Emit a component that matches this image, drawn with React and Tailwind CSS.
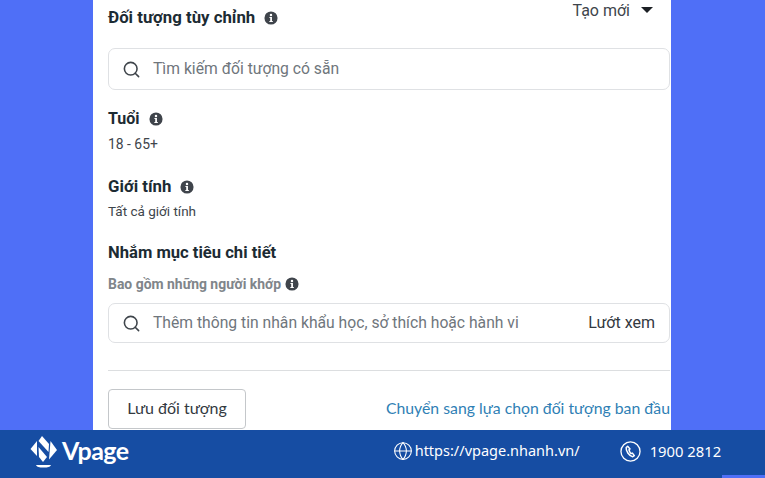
import { Search, Globe } from "lucide-react";

const InfoIcon = ({ className }) => (
  <svg viewBox="0 0 16 16" className={className}>
    <circle cx="8" cy="8" r="7.500" fill="#3f444b" />
    <circle cx="8" cy="4.500" r="1.400" fill="#fff" />
    <path d="M6.200 6.800h2.900v4.600h1v1.300H6.100v-1.300h1V8.100h-.9z" fill="#fff" />
  </svg>
);

const Logo = () => (
  <svg viewBox="30 433 28 35" className="w-[28px] h-[35px]" fill="#fff">
    <polygon points="30.500,448 37,440 37,455" />
    <polygon points="42,435 49,443 48.500,451 38.500,440" />
    <polygon points="50.500,440 57,449 49,458.500" />
    <polygon points="38.500,446 47,456 43,461 39,456" />
    <path d="M36 464h15c-1 2-3 2.500-7.500 2.500s-6.500-.5-7.500-2.500z" />
  </svg>
);

const PhoneRing = () => (
  <svg viewBox="0 0 22 22" className="w-[21px] h-[21px]" fill="none" stroke="#fff">
    <circle cx="11" cy="11" r="10" strokeWidth="1.400" />
    <path
      d="M8 5.500 6.500 6.800c-.5 3.600 2.800 8.700 6.800 9.700l1.700-1.200-2-2.600-1.400.5c-1-.8-1.900-2.600-2.200-4l1.100-.9z"
      strokeWidth="1.600"
      strokeLinejoin="round"
    />
  </svg>
);

const Label = ({ text, size }) => (
  <div className={`flex items-center gap-[9px] h-[20px] font-bold text-[#1c2b33] ${size}`}>
    <span>{text}</span>
    <InfoIcon className="w-[14px] h-[14px]" />
  </div>
);

const SearchBox = ({ placeholder, right, height }) => (
  <div className={`flex items-center pl-[13px] pr-[14px] bg-white border border-[#dfe1e4] rounded-[7px] ${height}`}>
    <Search className="w-[19px] h-[19px] text-[#3f454b] shrink-0" strokeWidth={2} />
    <span className="ml-[12px] text-[15.700px] text-[#6f767c]">{placeholder}</span>
    {right && <span className="ml-auto text-[16px] text-[#33393f]">{right}</span>}
  </div>
);

export default function App() {
  return (
    <div className="relative w-[765px] h-[478px] overflow-hidden flex flex-col bg-[#4f6ff7] font-['Roboto',sans-serif]">
      <div className="ml-[93px] w-[578px] h-[430px] bg-white pl-[15px] pr-px flex flex-col">
        <div className="flex items-start justify-between pt-[8px] h-[48px]">
          <Label text="Đối tượng tùy chỉnh" size="text-[16.800px]" />
          <div className="flex items-center gap-[11px] pr-[17px] -mt-[7px] h-[20px]">
            <span className="text-[16px] text-[#3e454b]">Tạo mới</span>
            <span className="w-0 h-0 -mt-[2px] border-x-[6.500px] border-x-transparent border-t-[6px] border-t-[#1c2025]" />
          </div>
        </div>
        <SearchBox placeholder="Tìm kiếm đối tượng có sẵn" height="h-[42px]" />
        <div className="mt-[19px]">
          <Label text="Tuổi" size="text-[16px]" />
        </div>
        <p className="mt-[7px] text-[13.900px] leading-[16px] text-[#3e454b]">18 - 65+</p>
        <div className="mt-[25px]">
          <Label text="Giới tính" size="text-[16.800px]" />
        </div>
        <p className="mt-[6px] text-[13.500px] leading-[16px] text-[#3e454b]">Tất cả giới tính</p>
        <div className="mt-[24px] h-[20px] flex items-center text-[16.600px] font-bold text-[#1c2b33]">Nhắm mục tiêu chi tiết</div>
        <div className="mt-[11px] h-[20px] flex items-center gap-[4px] text-[13.950px] font-bold text-[#80858a]">
          <span>Bao gồm những người khớp</span>
          <InfoIcon className="w-[14px] h-[14px]" />
        </div>
        <div className="mt-[9px]">
          <SearchBox placeholder="Thêm thông tin nhân khẩu học, sở thích hoặc hành vi" right="Lướt xem" height="h-[40px]" />
        </div>
        <div className="mt-[27px] h-px bg-[#dcdee0]" />
        <div className="mt-[18px] flex items-center justify-between">
          <div className="w-[138px] h-[40px] pb-[2px] flex items-center justify-center border border-[#c4c7ca] rounded-[4px] text-[16px] text-[#33393f] font-['Lato',sans-serif]">
            Lưu đối tượng
          </div>
          <span className="mb-[2px] text-[15.800px] text-[#2f7fb5] font-['Lato',sans-serif] whitespace-nowrap">Chuyển sang lựa chọn đối tượng ban đầu</span>
        </div>
      </div>
      <div className="h-[48px] pb-[6px] bg-[#164da3] flex items-center text-white">
        <div className="ml-[30px] flex items-center gap-[4px]">
          <Logo />
          <span className="text-[25px] font-bold tracking-[-0.5px] font-['Lato',sans-serif]">Vpage</span>
        </div>
        <div className="ml-[264px] flex items-center gap-[2px]">
          <Globe className="w-[20px] h-[20px]" strokeWidth={1.300} />
          <span className="text-[14.500px] font-['Noto_Sans',sans-serif]">https://vpage.nhanh.vn/</span>
        </div>
        <div className="ml-[40px] flex items-center gap-[9px]">
          <PhoneRing />
          <span className="text-[14.800px] font-['Noto_Sans',sans-serif]">1900 2812</span>
        </div>
      </div>
      <div className="absolute right-0 bottom-0 w-[43px] h-[3px] bg-[#4f6ff7]" />
    </div>
  );
}
